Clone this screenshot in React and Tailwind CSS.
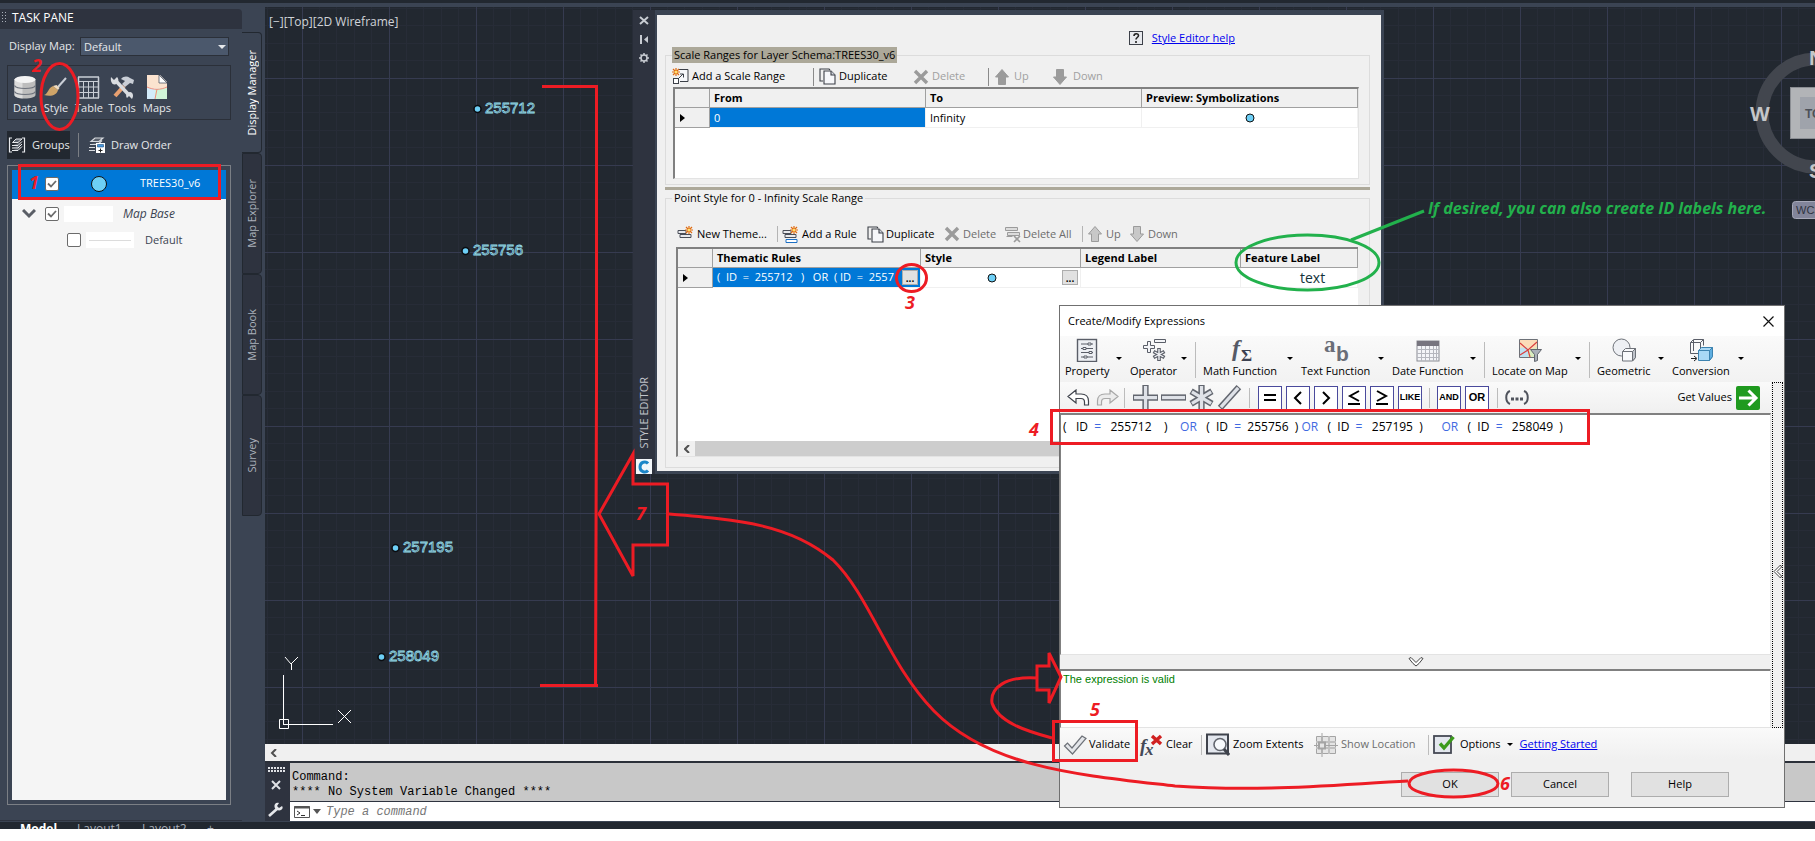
import { useState } from "react";

const SANS = "font-['Open_Sans','Noto_Sans',sans-serif]";

const MAP_POINTS = [
  { id: "255712", x: 212, y: 102 },
  { id: "255756", x: 200, y: 244 },
  { id: "257195", x: 130, y: 541 },
  { id: "258049", x: 116, y: 650 },
];

const PANE_TABS = ["Display Manager", "Map Explorer", "Map Book", "Survey"];

/* ---------- icons ---------- */

function DataIcon() {
  return (
    <svg width="24" height="24" viewBox="0 0 24 24">
      <path d="M1.500 4v16c0 2 5 3.500 10.500 3.500s10.500-1.500 10.500-3.500V4z" fill="#bdbdbd" />
      <path d="M1.500 4v16c0 2 5 3.500 8 3.400V6z" fill="#dcdcdc" />
      <ellipse cx="12" cy="4.500" rx="10.500" ry="3.500" fill="#f4f4f4" />
      <path d="M1.500 10.500c2 4 19 4 21 0M1.500 16.500c2 4 19 4 21 0" fill="none" stroke="#6d727c" strokeWidth="1.200" />
    </svg>
  );
}

function BrushIcon() {
  return (
    <svg width="24" height="24" viewBox="0 0 24 24">
      <path d="M22 3L14 12" stroke="#c9ced6" strokeWidth="2" />
      <path d="M9 11l5 4c-1 5-7 7-14 5 4-1 4-7 9-9z" fill="#cfa468" />
      <path d="M9 11l3.500-1 3 3L14 15z" fill="#f0dcc0" />
    </svg>
  );
}

function TableIcon() {
  return (
    <svg width="24" height="24" viewBox="0 0 24 24" fill="none" stroke="#c9ced6">
      <path d="M1 2h21M1 23h21M1.500 2v21M21.500 2v21" strokeWidth="1.500" />
      <path d="M1 6.500h21M1 12h21M1 17.500h21M6.500 6v17M11.500 6v17M16.500 6v17" />
    </svg>
  );
}

function ToolsIcon() {
  return (
    <svg width="24" height="24" viewBox="0 0 24 24">
      <path d="M5 21L14 11" stroke="#e8a070" strokeWidth="4" />
      <path d="M11 4c3-3 6-3 9-1l4 2-1 4-3-1-5 4-3-3 3-3z" fill="#c9ced6" />
      <path d="M6 6l12 13" stroke="#d9dce0" strokeWidth="3.500" />
      <path d="M1 2l3 3 3-3c2 2 2 5-1 7S0 7 1 2zM22 24l-3-3-2 2c-2-3 0-6 3-6s4 4 2 7z" fill="#d9dce0" />
    </svg>
  );
}

function MapsIcon() {
  return (
    <svg width="24" height="24" viewBox="0 0 24 24">
      <path d="M2 0h13l7 7v17H2z" fill="#fdf3ea" />
      <path d="M2 0h12v8h8v5H2z" fill="#fbe3cf" />
      <path d="M2 13l8 1v10H2z" fill="#d3ecfa" />
      <path d="M10 14l12-1v11H10z" fill="#d0f5d8" />
      <path d="M2 12c6 3 14 3 20 0M12 14l-2 10" fill="none" stroke="#ef8e7e" />
      <path d="M14 0l8 8h-8z" fill="#fff" stroke="#3b4453" strokeWidth="0.700" />
    </svg>
  );
}

function GroupsIcon() {
  return (
    <svg width="18" height="18" viewBox="0 0 18 18" fill="none" stroke="#e8eaed">
      <path d="M4 2H1.500v14H4M14 2h2.500v14H14" strokeWidth="1.200" />
      <path d="M8 3h6l-4 3.500H4.500zM4 9.500h6l4-4M4 12h6l4-4M4 14.500h6l4-4" fill="#5a616c" />
    </svg>
  );
}

function DrawOrderIcon() {
  return (
    <svg width="18" height="18" viewBox="0 0 18 18" fill="none" stroke="#d8dbe0">
      <path d="M7 2h8l-4 3.500H3zM2 8.500h8l4-4M1 11.500h6M1 14.500h6" fill="#5a616c" strokeWidth="1.200" />
      <rect x="8.500" y="7.500" width="8" height="9" fill="#fff" stroke="#fff" />
      <path d="M9.500 8.500h6v2.500h-6z" fill="#4a9be0" stroke="#1f4f80" strokeWidth="0.600" />
      <path d="M10.500 14.500h4M12.500 12.500v4" stroke="#222" />
    </svg>
  );
}

function Burst({ x, y }) {
  return (
    <g transform={`translate(${x} ${y})`}>
      <path d="M0-4V4M-4 0H4M-3-3L3 3M-3 3L3-3" stroke="#e06a10" strokeWidth="1.200" />
      <circle r="1.500" fill="#ffe070" />
    </g>
  );
}

function AddRangeIcon() {
  return (
    <svg width="17" height="17" viewBox="0 0 17 17">
      <path d="M6.500 1.500h9v12h-9z" fill="#f6f7fa" />
      <path d="M7 1.500h9v12H8" fill="none" stroke="#3c4048" />
      <path d="M6 11l5-5M8 6h3.500v3.500" fill="none" stroke="#3c4048" />
      <rect x="1.500" y="10.500" width="5" height="5" fill="#fff" stroke="#3c4048" />
      <Burst x={4} y={4} />
    </svg>
  );
}

function DuplicateIcon() {
  return (
    <svg width="17" height="17" viewBox="0 0 17 17" fill="#f6f7fa" stroke="#3c4048" strokeWidth="1.100">
      <path d="M4 13H1V1h9l1 1" fill="none" />
      <path d="M5 3h7l4 4v9H5z" />
      <path d="M12 3v4h4" fill="#cfd3dc" />
    </svg>
  );
}

function CrossIcon() {
  return (
    <svg width="16" height="16" viewBox="0 0 16 16">
      <path d="M2 2l12 12M14 2L2 14" stroke="#9b9b9b" strokeWidth="3.400" />
    </svg>
  );
}

function ArrowIcon({ down, light }) {
  return (
    <svg width="14" height="16" viewBox="0 0 14 16" className={down ? "rotate-180" : ""}>
      <path
        d="M7 0.500L13.500 8H10.500V15.500H3.500V8H0.500z"
        fill={light ? "#c8c8c8" : "#9b9b9b"}
        stroke="#9b9b9b"
      />
    </svg>
  );
}

function ThemeIcon({ blue }) {
  return (
    <svg width="17" height="17" viewBox="0 0 17 17">
      <path d="M1 4.500h8v3H1zM3 8.500h11v3H3z" fill="#e8eaee" stroke="#4a4e58" />
      {blue && <path d="M4 13.500h11v3H4z" fill="#fff" stroke="#1c6fc4" />}
      <Burst x={12} y={4} />
    </svg>
  );
}

function DeleteAllIcon() {
  return (
    <svg width="17" height="17" viewBox="0 0 17 17" fill="#dcdcdc" stroke="#9b9b9b">
      <path d="M1.500 1.500h12v3h-12zM3.500 6.500h12v3h-12zM2.500 10.500h6" />
      <path d="M10 10l6 6M16 10l-6 6" strokeWidth="1.600" />
    </svg>
  );
}

function PropertyIcon() {
  return (
    <svg width="24" height="24" viewBox="0 0 24 24" fill="none" stroke="#5a5e68">
      <rect x="2.500" y="1.500" width="19" height="22" fill="#eef0f4" strokeWidth="1.400" />
      <path d="M6 6h12M6 10.500h12M6 14.500h12M6 19h12" />
      <path d="M13 5h3v2h-3zM8 9.500h3v2H8zM14 13.500h3v2h-3zM9 18h3v2H9z" fill="#fff" />
    </svg>
  );
}

function OperatorIcon() {
  return (
    <svg width="24" height="24" viewBox="0 0 24 24" fill="#f4f5f8" stroke="#5a5e68">
      <path d="M5.500 3.500h3v4h4v3h-4v4h-3v-4h-4v-3h4z" />
      <path d="M12.500 1.500h11v3h-11z" />
      <path d="M17 10v13M11.500 13.500l11 6M11.500 19.500l11-6" strokeWidth="3.600" />
      <path d="M17 11v11M12.500 14l9 5M12.500 19l9-5" stroke="#f4f5f8" strokeWidth="1.400" />
    </svg>
  );
}

function MathIcon() {
  return (
    <svg width="24" height="24" viewBox="0 0 24 24">
      <text x="4" y="18" fontSize="24" fontStyle="italic" fontWeight="bold" fontFamily="Liberation Serif" fill="#565a66">f</text>
      <text x="13" y="23" fontSize="17" fontWeight="bold" fontFamily="Liberation Serif" fill="#3d4150">Σ</text>
    </svg>
  );
}

function TextIcon() {
  return (
    <svg width="26" height="24" viewBox="0 0 26 24">
      <text x="1" y="14" fontSize="23" fontWeight="bold" fontFamily="Liberation Serif" fill="#6a6e78">a</text>
      <text x="13" y="23" fontSize="21" fontWeight="bold" fontFamily="Liberation Sans" fill="#6a6e78">b</text>
    </svg>
  );
}

function DateIcon() {
  return (
    <svg width="24" height="24" viewBox="0 0 24 24">
      <rect x="1" y="3" width="22" height="20" fill="#f4f5f8" stroke="#8a8c94" />
      <path d="M1 3h22v5H1z" fill="#77757f" />
      <path d="M1 11.500h22M1 15.500h22M1 19.500h22M5.500 8v15M9.500 8v15M13.500 8v15M17.500 8v15M20.500 8v15" stroke="#b5b7be" />
    </svg>
  );
}

function LocateIcon() {
  return (
    <svg width="24" height="24" viewBox="0 0 24 24">
      <path d="M1.500 1.500h18v18h-18z" fill="#fbdcb8" stroke="#6d7178" />
      <path d="M2 10l7-1 2 10H2z" fill="#bfe0f0" />
      <path d="M10 12l9-3v10h-9z" fill="#d8ecc0" />
      <path d="M2 5l8 7 9-8M10 12l2 7M2 17l8-5" fill="none" stroke="#d94040" strokeWidth="1.200" />
      <path d="M12.500 11.500h11l-4 5v6l-3 1v-7z" fill="#aab0ba" stroke="#62666f" />
    </svg>
  );
}

function GeometricIcon() {
  return (
    <svg width="24" height="24" viewBox="0 0 24 24" stroke="#6d7178">
      <circle cx="9.500" cy="9.500" r="8.500" fill="#eef0f4" />
      <path d="M10.500 13.500l3-3h10v9l-3 3.500h-10z" fill="#f8f9fb" />
      <path d="M20.500 13.500l3-3v9l-3 3.500z" fill="#bfc3ca" />
      <path d="M10.500 13.500h10" />
    </svg>
  );
}

function ConversionIcon() {
  return (
    <svg width="24" height="24" viewBox="0 0 24 24" fill="none" stroke="#5a5e68">
      <path d="M1.500 4.500h10v11h-10zM4.500 1.500h10v6M1.500 4.500l3-3M11.500 4.500l3-3M4.500 2v11" />
      <path d="M2 20.500h5M5 18l3 2.500-3 2.500" stroke="#222" />
      <path d="M9.500 12.500l3-3h11v9l-3 4h-11z" fill="#a9d8f5" stroke="#3d83b0" />
      <path d="M20.500 12.500l3-3v9l-3 4z" fill="#5faee0" stroke="#3d83b0" />
      <path d="M9.500 12.500h11" stroke="#3d83b0" />
    </svg>
  );
}

function UndoIcon({ redo }) {
  return (
    <svg width="23" height="18" viewBox="0 0 23 18" className={redo ? "-scale-x-100" : ""}>
      <path
        d="M1 7.500L9 1v4h5c5 0 7.500 3 7.500 7v4h-4v-3c0-2-1-3.500-3.500-3.500H9V14z"
        fill={redo ? "#ececec" : "#fff"}
        stroke={redo ? "#a8a8a8" : "#3f434c"}
        strokeWidth="1.200"
      />
    </svg>
  );
}

const OP_SHAPES = {
  plus: "M12 0v24M0 12h24",
  minus: "M0 12h24",
  times: "M12 0v24M2 6l20 12M2 18L22 6",
  divide: "M3 22L21 2",
};

function OpIcon({ shape }) {
  return (
    <svg width="25" height="25" viewBox="0 0 24 24">
      <path d={OP_SHAPES[shape]} stroke="#62666f" strokeWidth="6" />
      <path d={OP_SHAPES[shape]} stroke="#dfe2e8" strokeWidth="3.400" transform="translate(1 1) scale(0.920)" />
    </svg>
  );
}

function CheckMark() {
  return (
    <svg width="24" height="20" viewBox="0 0 24 20">
      <path d="M1.500 11l3-3 4.500 5L19 1l4 2.500L9.500 19z" fill="#e4e6ea" stroke="#6d7178" strokeWidth="1.200" />
    </svg>
  );
}

function ClearIcon() {
  return (
    <svg width="25" height="24" viewBox="0 0 25 24">
      <text x="2" y="19" fontSize="19" fontStyle="italic" fontWeight="bold" fontFamily="Liberation Serif" fill="#454957">f</text>
      <text x="7" y="22" fontSize="17" fontStyle="italic" fontWeight="bold" fontFamily="Liberation Serif" fill="#454957">x</text>
      <path d="M14 3l9 8M23 3l-9 8" stroke="#d02020" strokeWidth="3.400" />
    </svg>
  );
}

function ZoomIcon() {
  return (
    <svg width="24" height="24" viewBox="0 0 24 24">
      <rect x="1" y="1.500" width="21" height="19" fill="#e3e7ee" stroke="#3f434c" strokeWidth="2" />
      <circle cx="14" cy="11.500" r="6" fill="#f6f9fc" stroke="#62666f" strokeWidth="1.600" />
      <path d="M18 16l5 6" stroke="#3f434c" strokeWidth="3" />
    </svg>
  );
}

function LocationIcon() {
  return (
    <svg width="24" height="24" viewBox="0 0 24 24" fill="#e4e4e4" stroke="#a4a4a4">
      <path d="M2.500 3.500h19v17h-19z" />
      <path d="M2 9h20M2 15h20M8 3v18M15 3v18" stroke="#c0c0c0" strokeWidth="2" />
      <path d="M8 0v24M0 12.500h24" />
      <rect x="5" y="9.500" width="6" height="6" strokeWidth="2" />
    </svg>
  );
}

function OptionsIcon() {
  return (
    <svg width="23" height="21" viewBox="0 0 23 21">
      <rect x="1" y="2" width="17" height="17" fill="#e3e7ee" stroke="#454954" strokeWidth="1.800" />
      <path d="M7 9.500l4 4.500L20.500 3" fill="none" stroke="#3c9a1c" strokeWidth="3.400" />
    </svg>
  );
}

function GoIcon() {
  return (
    <svg width="24" height="24" viewBox="0 0 24 24">
      <rect x="0" y="0" width="24" height="24" rx="2" fill="#1f9a1f" />
      <path d="M3 12h17M12.500 4.500L20 12l-7.500 7.500" fill="none" stroke="#fff" strokeWidth="3" />
    </svg>
  );
}

function Caret() {
  return <span className="block h-0 w-0 border-x-[3px] border-t-[3px] border-x-transparent border-t-black" />;
}

/* ---------- task pane ---------- */

function PaneTool({ icon, label, className }) {
  return (
    <button className={`flex shrink-0 flex-col items-center ${className}`}>
      {icon}
      <span className="leading-[18px]">{label}</span>
    </button>
  );
}

function LayerCheck({ checked, label }) {
  const [on, setOn] = useState(checked);
  return (
    <span className="relative flex h-[14px] w-[14px] shrink-0">
      <input
        type="checkbox"
        aria-label={label}
        checked={on}
        onChange={(e) => setOn(e.target.checked)}
        className="h-[14px] w-[14px] appearance-none rounded-[2px] border border-[#6b6b6b] bg-white"
      />
      {on && (
        <svg width="14" height="14" className="pointer-events-none absolute inset-0">
          <path d="M3 6.500l3 3L11 4" fill="none" stroke="#6b6b6b" strokeWidth="1.800" />
        </svg>
      )}
    </span>
  );
}

function TaskPane() {
  return (
    <aside className="flex w-[265px] shrink-0 bg-[#3b4453] pt-[2px] text-[11px] text-[#e6e8eb]">
      <div className="flex w-[242px] flex-col border-b border-[#2e333f] pb-[15px]">
        <header className="flex h-5 items-center gap-[6px] rounded-tr bg-[#2e333f] pb-[2px] pl-[2px] text-[12px] text-white">
          <svg width="4" height="12" fill="#aab0ba">
            <path d="M0 0h1v1H0zM3 0h1v1H3zM0 3h1v1H0zM3 3h1v1H3zM0 6h1v1H0zM3 6h1v1H3zM0 9h1v1H0zM3 9h1v1H3z" />
          </svg>
          TASK PANE
        </header>

        <div className="mt-2 flex items-center pl-[9px]">
          <label htmlFor="display-map" className="w-[71px] whitespace-nowrap">
            Display Map:
          </label>
          <span className="relative flex">
            <select
              id="display-map"
              className="h-[19px] w-[149px] appearance-none border border-[#2b3039] bg-[#4b586c] pl-[3px] text-[11px] leading-4"
            >
              <option>Default</option>
            </select>
            <span className="pointer-events-none absolute top-2 right-[3px] border-x-4 border-t-4 border-x-transparent border-t-[#e6e8eb]" />
          </span>
        </div>

        <div className="mt-[9px] ml-[7px] flex h-[55px] w-[224px] border border-[#2b3039] pt-[9px] pl-[3px]">
          <PaneTool icon={<DataIcon />} label="Data" className="w-7" />
          <PaneTool icon={<BrushIcon />} label="Style" className="w-[34px]" />
          <PaneTool icon={<TableIcon />} label="Table" className="w-8" />
          <PaneTool icon={<ToolsIcon />} label="Tools" className="w-[34px]" />
          <PaneTool icon={<MapsIcon />} label="Maps" className="w-9" />
        </div>

        <div className="mt-[11px] ml-[7px] flex h-7 items-center">
          <button className="flex h-7 w-[63px] items-center gap-[6px] bg-[#222830] pl-[1px]">
            <GroupsIcon />
            Groups
          </button>
          <span className="mr-[9px] ml-2 h-6 w-px bg-[#7b7f85]" />
          <button className="flex items-center gap-[5px]">
            <DrawOrderIcon />
            Draw Order
          </button>
        </div>

        <div className="mt-[6px] ml-[7px] w-[224px] flex-1 border border-[#7b7f85] p-1">
          <ul className="h-full bg-[#f5f5f5] text-[#3c4452]">
            <li className="flex h-[29px] items-center bg-[#0078d7] pb-[2px] pl-[33px] text-white">
              <LayerCheck checked label="TREES30_v6" />
              <svg width="18" height="18" className="ml-[31px]">
                <circle cx="9" cy="9" r="7.500" fill="#6dcff6" stroke="#111" />
              </svg>
              <span className="ml-8">TREES30_v6</span>
            </li>
            <li className="flex h-7 items-center pt-[2px] pl-[10px]">
              <svg width="14" height="10" className="mr-[9px]">
                <path d="M1 1l6 6 6-6" fill="none" stroke="#5a5e66" strokeWidth="3" />
              </svg>
              <LayerCheck checked label="Map Base" />
              <span className="ml-[5px] h-4 w-[49px] bg-white" />
              <em className="ml-[10px] text-[12px]">Map Base</em>
            </li>
            <li className="flex h-[26px] items-center pl-[55px]">
              <LayerCheck checked={false} label="Default" />
              <span className="ml-[5px] flex h-4 w-12 items-center bg-white px-[3px]">
                <span className="h-px w-full bg-[#dcdcdc]" />
              </span>
              <span className="ml-[11px]">Default</span>
            </li>
          </ul>
        </div>
      </div>

      <nav className="mt-[23px] flex w-5 flex-col">
        {PANE_TABS.map((tab, i) => (
          <button
            key={tab}
            className={`flex h-[121px] w-5 items-center justify-center rounded-r border border-[#222830] whitespace-nowrap ${
              i === 0 ? "border-l-0 bg-[#3b4453] text-white" : "bg-[#2e333f] text-[#aab0ba]"
            }`}
          >
            <span className="rotate-180 leading-4 [writing-mode:vertical-rl]">{tab}</span>
          </button>
        ))}
      </nav>
    </aside>
  );
}

/* ---------- drawing area ---------- */

function ViewCube() {
  return (
    <div className="absolute top-[38px] right-0 h-[180px] w-[67px] overflow-hidden">
      <svg width="67" height="180" fontFamily="Liberation Sans">
        <circle cx="68" cy="68" r="54" fill="none" stroke="#42464e" strokeWidth="13" />
        <rect x="42.500" y="42.500" width="60" height="51" fill="#b2b4b7" stroke="#8b8e93" />
        <rect x="52" y="52" width="40" height="32" fill="#9fa3ab" />
        <text x="57" y="73" fontSize="12" fontWeight="bold" fill="#4c5058">TOP</text>
        <g fontSize="21" fontWeight="bold" fill="#c4c6c9">
          <text x="2" y="76">W</text>
          <text x="61" y="20">N</text>
          <text x="61" y="133">S</text>
        </g>
        <rect x="44.500" y="156.500" width="50" height="17" rx="3" fill="#82859a" stroke="#a6a8b8" />
        <text x="48" y="169" fontSize="11" fill="#2e333f">WCS</text>
      </svg>
    </div>
  );
}

function DrawingArea() {
  return (
    <section className="relative flex-1 overflow-hidden bg-[#222830]">
      <svg className="absolute inset-0 h-full w-full">
        <defs>
          <pattern id="grid" x="37" y="71" width="87" height="87" patternUnits="userSpaceOnUse">
            <path
              d="M17.500 0v87M34.500 0v87M52.500 0v87M69.500 0v87M0 17.500h87M0 34.500h87M0 52.500h87M0 69.500h87"
              stroke="#272c37"
            />
            <path d="M0.500 0v87M0 0.500h87" stroke="#363b50" />
          </pattern>
        </defs>
        <rect width="100%" height="100%" fill="url(#grid)" />
        {MAP_POINTS.map((p) => (
          <g key={p.id}>
            <circle cx={p.x + 0.5} cy={p.y} r="3.500" fill="#6dcff6" stroke="#0a0c10" strokeWidth="1.500" />
            <text
              x={p.x + 8}
              y={p.y + 4}
              fontSize="15"
              fontFamily="Liberation Sans"
              fill="#222830"
              stroke="#93dcec"
              strokeWidth="0.800"
            >
              {p.id}
            </text>
          </g>
        ))}
        <g fill="none" stroke="#fff">
          <path d="M18.500 668v50M19 717.500h49M14.500 712.500h9v9h-9z" />
          <path d="M20 650l6 7 7-7M26.500 657v6M73 703l13 13M86 703l-13 13" />
        </g>
      </svg>
      <p className="absolute top-[7px] left-1 text-[12px] leading-4 text-[#d0d3d8]">[−][Top][2D Wireframe]</p>
      <ViewCube />
    </section>
  );
}

function CommandLine() {
  return (
    <section className="flex h-[60px] border-t-2 border-[#2b3039] bg-[#2e333f]">
      <div className="flex w-[25px] flex-col items-center gap-2 pt-[4px] pr-[3px]">
        <svg width="17" height="5">
          <path d="M0 1h17M0 4h17" stroke="#dfe1e5" strokeWidth="2" strokeDasharray="2 1" />
        </svg>
        <svg width="10" height="10">
          <path d="M1 1l8 8M9 1L1 9" stroke="#dfe1e5" strokeWidth="2" />
        </svg>
        <svg width="16" height="16" className="mt-1">
          <path d="M1 14L10 6" stroke="#e6e8eb" strokeWidth="2.600" />
          <path d="M14 4l-3 2-2-2 2-3c-3-1-5 1-4.500 4S11 9 13 8s2-3 1-4z" fill="#e6e8eb" />
        </svg>
      </div>
      <div className="flex flex-1 flex-col font-['Liberation_Mono',monospace] text-[12px]">
        <div className="h-[38px] bg-[#c8c8c8] pt-[7px] pl-[2px] leading-[15px] whitespace-pre text-black">
          <p>Command:</p>
          <p>**** No System Variable Changed ****</p>
        </div>
        <label className="mt-px flex flex-1 items-center bg-white pl-1">
          <svg width="16" height="12">
            <path d="M0.500 0.500h15v11H0.500z" fill="#fff" stroke="#555" />
            <path d="M0 1.500h16" stroke="#555" strokeWidth="2" />
            <path d="M3 5l3 2-3 2M7 9.500h4" fill="none" stroke="#333" />
          </svg>
          <span className="mx-[3px] border-x-4 border-t-[5px] border-x-transparent border-t-[#555]" />
          <input
            aria-label="Command"
            placeholder="Type a command"
            className="ml-[2px] w-60 italic outline-none placeholder:text-[#777]"
          />
        </label>
      </div>
    </section>
  );
}

/* ---------- style editor ---------- */

function ToolButton({ icon, children, disabled, muted, className = "" }) {
  return (
    <button
      disabled={disabled}
      className={`flex shrink-0 items-center whitespace-nowrap ${
        muted ? "text-[#6d6d6d]" : disabled ? "text-[#a0a0a0]" : "text-black"
      } ${className}`}
    >
      {icon}
      {children}
    </button>
  );
}

function RowMarker() {
  return (
    <td className="border-r border-b border-[#a0a0a0] bg-[#f0f0f0] p-0">
      <span className="ml-[5px] block h-0 w-0 border-y-4 border-l-[5px] border-y-transparent border-l-black" />
    </td>
  );
}

const TH = "h-[19px] border-r border-b border-[#a0a0a0] bg-[#f0f0f0] py-0 pr-0 pl-1 text-left leading-4 font-bold whitespace-nowrap";
const TD = "h-5 border-r border-b border-[#f0f0f0] py-0 pr-0 pl-1 leading-4";

function Dot() {
  return (
    <svg width="10" height="10" className="block">
      <circle cx="5" cy="5" r="4" fill="#6dcff6" stroke="#111" />
    </svg>
  );
}

function EllipsisButton() {
  return (
    <button
      aria-label="Edit"
      className="h-[15px] w-4 shrink-0 border border-[#adadad] bg-[#e1e1e1] text-[10px] leading-3 font-bold text-black"
    >
      ...
    </button>
  );
}

function ScaleRanges() {
  return (
    <fieldset className="h-[138px] min-w-0 border border-[#dcdcdc] pl-[6px]">
      <legend className="bg-[#aca899] px-[2px] leading-4 text-black">Scale Ranges for Layer Schema:TREES30_v6</legend>
      <div className="flex h-6 items-center pt-[3px]">
        <ToolButton icon={<AddRangeIcon />} className="w-[141px] gap-[3px]">Add a Scale Range</ToolButton>
        <span className="mr-[5px] h-[18px] w-px bg-[#8a8a8a]" />
        <ToolButton icon={<DuplicateIcon />} className="w-[94px] gap-[3px]">Duplicate</ToolButton>
        <ToolButton icon={<CrossIcon />} disabled className="w-[75px] gap-[3px]">Delete</ToolButton>
        <span className="mr-[6px] h-[18px] w-px bg-[#8a8a8a]" />
        <ToolButton icon={<ArrowIcon />} disabled className="w-[58px] gap-[5px]">Up</ToolButton>
        <ToolButton icon={<ArrowIcon down />} disabled className="gap-[6px]">Down</ToolButton>
      </div>
      <div className="mr-[10px] ml-[1px] h-[92px] border-t-2 border-r border-b border-l-2 border-t-[#808080] border-r-[#e3e3e3] border-b-[#e3e3e3] border-l-[#808080] bg-white">
        <table className="w-full table-fixed border-separate border-spacing-0 text-black">
          <thead>
            <tr>
              <th className={`${TH} w-[35px]`}></th>
              <th className={TH}>From</th>
              <th className={TH}>To</th>
              <th className={TH}>Preview: Symbolizations</th>
            </tr>
          </thead>
          <tbody>
            <tr>
              <RowMarker />
              <td className={`${TD} bg-[#0078d7] text-white`}>0</td>
              <td className={TD}>Infinity</td>
              <td className={TD}>
                <span className="flex justify-center pr-1"><Dot /></span>
              </td>
            </tr>
          </tbody>
        </table>
      </div>
    </fieldset>
  );
}

function PointStyle() {
  return (
    <fieldset className="flex h-[278px] min-w-0 flex-col border border-[#dcdcdc] pl-[10px]">
      <legend className="-ml-1 px-[2px] leading-4 text-black">Point Style for 0 - Infinity Scale Range</legend>
      <div className="mt-[18px] flex h-5 items-center pl-[1px]">
        <ToolButton icon={<ThemeIcon />} className="w-[100px] gap-[3px]">New Theme...</ToolButton>
        <span className="mr-1 h-4 w-px bg-[#b4b4b4]" />
        <ToolButton icon={<ThemeIcon blue />} className="w-[85px] gap-[3px]">Add a Rule</ToolButton>
        <ToolButton icon={<DuplicateIcon />} className="w-[77px] gap-[2px]">Duplicate</ToolButton>
        <ToolButton icon={<CrossIcon />} disabled muted className="w-[60px] gap-[3px]">Delete</ToolButton>
        <ToolButton icon={<DeleteAllIcon />} disabled muted className="w-[78px] gap-[2px]">Delete All</ToolButton>
        <span className="mr-[5px] h-4 w-px bg-[#b4b4b4]" />
        <ToolButton icon={<ArrowIcon light />} disabled muted className="w-[42px] gap-1">Up</ToolButton>
        <ToolButton icon={<ArrowIcon light down />} disabled muted className="gap-1">Down</ToolButton>
      </div>
      <div className="mt-[3px] mr-[11px] mb-[10px] flex flex-1 flex-col justify-between border-t-2 border-b border-l-2 border-t-[#808080] border-b-[#e3e3e3] border-l-[#808080] bg-white">
        <table className="w-full table-fixed border-separate border-spacing-0 text-black">
          <thead>
            <tr>
              <th className={`${TH} w-[35px]`}></th>
              <th className={`${TH} w-[208px]`}>Thematic Rules</th>
              <th className={`${TH} w-[160px]`}>Style</th>
              <th className={`${TH} w-[160px]`}>Legend Label</th>
              <th className={TH}>Feature Label</th>
            </tr>
          </thead>
          <tbody>
            <tr>
              <RowMarker />
              <td className={`${TD} bg-[#0078d7] text-white`}>
                <span className="flex items-center justify-between pr-[2px]">
                  <span className="pb-[2px] whitespace-pre">(  ID  =  255712   )   OR  ( ID  =  2557</span>
                  <EllipsisButton />
                </span>
              </td>
              <td className={TD}>
                <span className="flex items-center justify-between pr-[2px] pl-[62px]">
                  <Dot />
                  <EllipsisButton />
                </span>
              </td>
              <td className={TD}></td>
              <td className={`${TD} text-[14px] text-[#14323a]`}>
                <span className="block pl-[55px] leading-4">text</span>
              </td>
            </tr>
          </tbody>
        </table>
        <div className="flex h-[15px] bg-[#cdcdcd]">
          <button aria-label="Scroll left" className="flex w-[17px] items-center justify-center bg-[#f0f0f0]">
            <svg width="6" height="8">
              <path d="M5 0L1 4l4 4" fill="none" stroke="#505050" strokeWidth="2" />
            </svg>
          </button>
        </div>
      </div>
    </fieldset>
  );
}

function StyleEditor() {
  return (
    <div className="absolute top-[10px] left-[633px] flex w-[751px] text-[11px]">
      <div className="flex w-[22px] flex-col items-center bg-[#2e333f] pt-[6px]">
        <svg width="12" height="48" fill="none" stroke="#c8ccd2">
          <path d="M2 1l8 7M10 1L2 8" strokeWidth="2" />
          <path d="M3 19v9" strokeWidth="2" />
          <path d="M10 20v7l-4-3.500z" fill="#c8ccd2" stroke="none" />
          <circle cx="6" cy="42" r="3" strokeWidth="1.500" />
          <path d="M6 37v2M6 45v2M1 42h2M9 42h2M2.500 38.500l1.500 1.500M8 44l1.500 1.500M2.500 45.500L4 44M8 40l1.500-1.500" strokeWidth="1.500" />
        </svg>
        <span className="mt-auto mb-[10px] rotate-180 leading-4 text-[#c0c4ca] [writing-mode:vertical-rl]">
          STYLE EDITOR
        </span>
        <svg width="16" height="15">
          <rect width="16" height="16" fill="#f2f6fa" />
          <path d="M12 4.500C10 2 4 2.500 4 8s6 6 8 3.500" fill="none" stroke="#1c86c8" strokeWidth="3" />
        </svg>
      </div>
      <div className="flex-1 border-t-[5px] border-r-[3px] border-b-[3px] border-l-2 border-[#3b4453] bg-[#f0f0f0] pr-[11px] pb-[3px] pl-2">
        <div className="mr-[135px] flex h-8 items-end justify-end gap-[9px] pb-[1px]">
          <svg width="14" height="14" className="mb-[1px]">
            <rect x="0.500" y="0.500" width="13" height="13" fill="#e8eaee" stroke="#3c4048" />
            <path d="M5 5c0-3 4.500-3 4.500-0.500C9.500 6.500 7 6.500 7 8.500M7 10v2" fill="none" stroke="#222" strokeWidth="1.600" />
          </svg>
          <a href="#help" className="leading-4 text-[#0000ee] underline">Style Editor help</a>
        </div>
        <ScaleRanges />
        <div className="mt-[2px] h-[3px] bg-[#aca899]" />
        <PointStyle />
      </div>
    </div>
  );
}

/* ---------- expression dialog ---------- */

function FunctionMenu({ icon, label, className }) {
  return (
    <button className={`flex shrink-0 ${className}`}>
      <span className="flex flex-col items-center">
        {icon}
        <span className="leading-[18px] whitespace-nowrap">{label}</span>
      </span>
      <span className="mt-[19px] mr-2 ml-auto"><Caret /></span>
    </button>
  );
}

function Divider({ className = "" }) {
  return <span className={`w-px shrink-0 bg-[#bcbcbc] ${className}`} />;
}

const COMPARE_OPS = [
  { name: "equals", d: "M6 9h12M6 14h12" },
  { name: "less than", d: "M15 6l-6 6 6 6" },
  { name: "greater than", d: "M9 6l6 6-6 6" },
  { name: "at most", d: "M17 5l-9 5 9 5M6 18h12" },
  { name: "at least", d: "M7 5l9 5-9 5M6 18h12" },
];

const WORD_BUTTON =
  "flex h-6 w-6 shrink-0 items-center justify-center border border-[#4a4a9c] bg-white font-['Liberation_Sans_Narrow','Liberation_Sans',sans-serif] font-bold text-black";

// [text, isKeyword]
const TOKENS = [
  ["(   ID  ", false], ["=", true], ["   255712    )    ", false],
  ["OR", true], ["   (  ID  ", false], ["=", true], ["  255756  ) ", false],
  ["OR", true], ["   (  ID  ", false], ["=", true], ["   257195  )      ", false],
  ["OR", true], ["   (  ID  ", false], ["=", true], ["   258049  )", false],
];

function ExpressionDialog() {
  return (
    <div
      role="dialog"
      aria-label="Create/Modify Expressions"
      className="absolute top-[305px] left-[1059px] flex h-[503px] w-[726px] flex-col border border-[#707070] bg-[#f0f0f0] text-[11px] text-black"
    >
      <header className="flex h-[30px] shrink-0 items-center justify-between bg-white pr-[10px] pl-2">
        <h1>Create/Modify Expressions</h1>
        <button aria-label="Close">
          <svg width="11" height="11">
            <path d="M0.500 0.500l10 10M10.500 0.500l-10 10" stroke="#111" strokeWidth="1.200" />
          </svg>
        </button>
      </header>

      <div className="flex h-[46px] shrink-0 bg-gradient-to-b from-[#fafafa] to-[#f2f2f2] pt-[2px] pl-[5px]">
        <FunctionMenu icon={<PropertyIcon />} label="Property" className="w-[65px]" />
        <FunctionMenu icon={<OperatorIcon />} label="Operator" className="w-[65px]" />
        <Divider className="mt-1 mr-[7px] h-9" />
        <FunctionMenu icon={<MathIcon />} label="Math Function" className="w-[98px]" />
        <FunctionMenu icon={<TextIcon />} label="Text Function" className="w-[91px]" />
        <FunctionMenu icon={<DateIcon />} label="Date Function" className="w-[92px]" />
        <Divider className="mt-1 mr-[7px] h-9" />
        <FunctionMenu icon={<LocateIcon />} label="Locate on Map" className="w-[97px]" />
        <Divider className="mt-1 mr-[7px] h-9" />
        <FunctionMenu icon={<GeometricIcon />} label="Geometric" className="w-[75px]" />
        <FunctionMenu icon={<ConversionIcon />} label="Conversion" className="w-20" />
      </div>

      <div className="flex h-[346px] shrink-0 gap-[1px]">
        <div className="flex flex-1 flex-col">
          <div className="flex h-[31px] shrink-0 items-center bg-gradient-to-b from-[#fafafa] to-[#f0f0f0] pr-[11px] pl-[7px]">
            <button aria-label="Undo" className="mr-[6px]"><UndoIcon /></button>
            <button aria-label="Redo"><UndoIcon redo /></button>
            <Divider className="mr-[8px] ml-[5px] h-5" />
            <span className="flex gap-[3px]">
              <button aria-label="Plus"><OpIcon shape="plus" /></button>
              <button aria-label="Minus"><OpIcon shape="minus" /></button>
              <button aria-label="Times"><OpIcon shape="times" /></button>
              <button aria-label="Divide"><OpIcon shape="divide" /></button>
            </span>
            <Divider className="mr-[8px] ml-[7px] h-5" />
            <span className="flex gap-1">
              {COMPARE_OPS.map((op) => (
                <button key={op.name} aria-label={op.name} className="h-6 w-6 border border-[#4a4a9c] bg-white">
                  <svg width="22" height="22" viewBox="1 1 22 22">
                    <path d={op.d} fill="none" stroke="#000" strokeWidth="2" />
                  </svg>
                </button>
              ))}
              <button className={`${WORD_BUTTON} text-[9px]`}>LIKE</button>
            </span>
            <Divider className="mr-[7px] ml-[7px] h-5" />
            <span className="flex gap-1">
              <button className={`${WORD_BUTTON} text-[9px]`}>AND</button>
              <button className={`${WORD_BUTTON} text-[11px]`}>OR</button>
            </span>
            <Divider className="mr-[6px] ml-[8px] h-5" />
            <button aria-label="Parentheses">
              <svg width="26" height="18" viewBox="0 0 26 18" fill="none" stroke="#4f535c">
                <path d="M6 2C1 4 1 13 6 15M20 2c5 2 5 11 0 13" strokeWidth="2" />
                <path d="M7 10h3M11.500 10h3M16 10h3" strokeWidth="3" />
              </svg>
            </button>
            <button className="ml-auto flex items-center gap-1 whitespace-nowrap">
              Get Values
              <GoIcon />
            </button>
          </div>

          <div
            role="textbox"
            aria-label="Expression"
            className="flex-1 border-t-2 border-r border-b border-l border-t-[#808080] border-r-[#e3e3e3] border-b-[#e3e3e3] border-l-[#808080] bg-white pt-[3px] pl-[2px] text-[12px] leading-[18px] whitespace-pre"
          >
            {TOKENS.map(([text, keyword], i) => (
              <span key={i} className={keyword ? "text-[#4169e1]" : ""}>{text}</span>
            ))}
          </div>

          <button aria-label="Hide messages" className="flex h-[14px] shrink-0 items-center justify-center">
            <svg width="16" height="10" fill="#fff" stroke="#444">
              <path d="M1 1.500l2-1 5 5 5-5 2 1-4 5-3 2.500-3-2.500z" />
            </svg>
          </button>

          <div className="h-[59px] shrink-0 border-t-2 border-r border-b border-l border-t-[#808080] border-r-[#e3e3e3] border-b-[#e3e3e3] border-l-[#808080] bg-white pl-[2px] font-['Liberation_Sans',sans-serif] leading-4 text-[#008000]">
            The expression is valid
          </div>
        </div>
        <button aria-label="Collapse" className="mr-[1px] flex w-[11px] items-center justify-center border border-dotted border-black">
          <svg width="9" height="15" className="mt-8" fill="#fff" stroke="#444">
            <path d="M7.500 1l1 2-4.500 4.500L8.500 12l-1 2L1 7.500z" />
          </svg>
        </button>
      </div>

      <div className="flex h-[31px] shrink-0 items-center bg-gradient-to-b from-[#fafafa] to-[#f0f0f0] pt-[2px] pl-[3px]">
        <ToolButton icon={<CheckMark />} className="w-[75px] gap-[2px]">Validate</ToolButton>
        <ToolButton icon={<ClearIcon />} className="w-[63px] gap-[3px]">Clear</ToolButton>
        <Divider className="mr-1 h-5" />
        <ToolButton icon={<ZoomIcon />} className="w-[108px] gap-[3px]">Zoom Extents</ToolButton>
        <ToolButton icon={<LocationIcon />} disabled muted className="w-[114px] gap-[3px]">Show Location</ToolButton>
        <Divider className="mr-1 h-5" />
        <ToolButton icon={<OptionsIcon />} className="gap-1">
          Options
          <span className="ml-[2px]"><Caret /></span>
        </ToolButton>
        <a href="#start" className="ml-[7px] whitespace-nowrap text-[#0000ee] underline">Getting Started</a>
      </div>

      <footer className="flex flex-1 items-start justify-end pt-[13px] pr-[55px]">
        <button className="mr-3 h-[25px] w-[98px] border border-[#adadad] bg-[#e1e1e1]">OK</button>
        <button className="mr-[22px] h-[25px] w-[98px] border border-[#adadad] bg-[#e1e1e1]">Cancel</button>
        <button className="h-[25px] w-[98px] border border-[#adadad] bg-[#e1e1e1]">Help</button>
      </footer>
    </div>
  );
}

/* ---------- tutorial markup drawn over the windows ---------- */

const STEPS = [
  { n: 1, x: 29, y: 189 },
  { n: 2, x: 32, y: 72 },
  { n: 3, x: 905, y: 309 },
  { n: 4, x: 1029, y: 436 },
  { n: 5, x: 1090, y: 716 },
  { n: 6, x: 1500, y: 790 },
  { n: 7, x: 636, y: 520 },
];

function Markup() {
  return (
    <svg className="pointer-events-none absolute inset-0 h-full w-full" fontFamily="Open Sans" fontWeight="bold" fontStyle="italic">
      <g fill="none" stroke="#ed1c24" strokeWidth="3">
        <path d="M19.500 165.500h200v33h-200z" />
        <ellipse cx="59.500" cy="96.500" rx="18.500" ry="33" />
        <ellipse cx="911.500" cy="278" rx="15" ry="13.500" />
        <path d="M1051.500 410.500h537v33h-537z" />
        <path d="M1053.500 721.500h83v39h-83z" />
        <ellipse cx="1453.500" cy="783.500" rx="44.500" ry="13.500" />
        <path d="M542 86.500h54.500v299l-1 300M540 685.500h58" />
        <path d="M599 514l34-60v30h34.500v61H633v31z" />
        <path d="M668 514C740 520 790 524 833 560C870 596 888 664 934 711C990 768 1080 775 1175 786C1260 792 1330 785 1408 781" />
        <path d="M1061 677l-12-24v13h-12v24h12v13zM1037 678C1005 676 990 688 992 703C998 722 1026 731 1052 738" />
      </g>
      <g fill="none" stroke="#22b14c" strokeWidth="3">
        <ellipse cx="1307.500" cy="262.500" rx="71.500" ry="27.500" />
        <path d="M1351 240l73-29" />
      </g>
      <g fill="#ed1c24" fontSize="18">
        {STEPS.map((s) => (
          <text key={s.n} x={s.x} y={s.y}>{s.n}</text>
        ))}
      </g>
      <text x="1428" y="214" fontSize="16" fill="#22b14c">If desired, you can also create ID labels here.</text>
    </svg>
  );
}

export default function App() {
  return (
    <div className={`relative flex h-screen flex-col overflow-hidden bg-white pb-3 ${SANS}`}>
      <div className="h-[7px] shrink-0 border-b-4 border-[#3b4453] bg-[#222830]" />
      <main className="flex min-h-0 flex-1">
        <TaskPane />
        <div className="flex min-w-0 flex-1 flex-col">
          <DrawingArea />
          <div className="flex h-[17px] shrink-0 items-center bg-[#f0f0f0] pl-[5px]">
            <svg width="7" height="8">
              <path d="M6 0L2 4l4 4" fill="none" stroke="#505050" strokeWidth="2" />
            </svg>
          </div>
          <CommandLine />
        </div>
      </main>
      <footer className="flex h-2 shrink-0 overflow-hidden border-t border-[#3b4453] bg-[#222830] pl-5 text-[12px] leading-[14px] text-[#aab0ba]">
        <span className="w-[57px] font-bold text-white">Model</span>
        <span className="w-[65px]">Layout1</span>
        <span className="w-[65px]">Layout2</span>
        <span>+</span>
      </footer>
      <StyleEditor />
      <ExpressionDialog />
      <Markup />
    </div>
  );
}
